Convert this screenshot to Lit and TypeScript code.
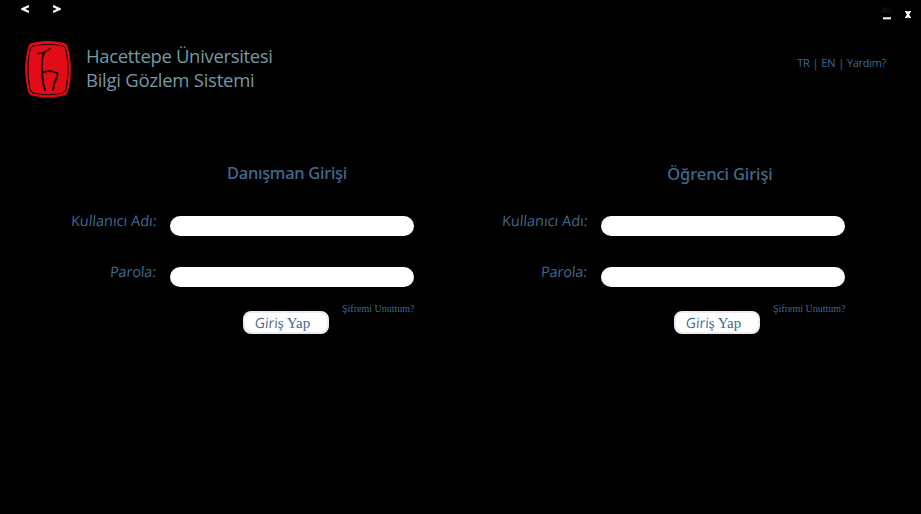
import { LitElement, html, css, svg } from "lit";
import { customElement, property } from "lit/decorators.js";

@customElement("login-panel")
class LoginPanel extends LitElement {
  @property() heading = "";

  static styles = css`
    :host { display: block; width: 345px; color: #41698f; font-family: "Open Sans", sans-serif; }
    h2 { margin: 0 0 0 87px; width: 262px; text-align: center; height: 24px;
      font: 500 16.5px/24px "Noto Sans", sans-serif; letter-spacing: -0.3px; white-space: nowrap; }
    :host(.student) h2 { padding-top: 1px; height: 23px; margin-left: 89px; letter-spacing: -0.1px; }
    .row { display: flex; height: 20px; margin-bottom: 31px; }
    .first { margin-top: 31px; }
    .row:nth-of-type(2) { margin-bottom: 0; }
    label { width: 88px; margin-right: 13px; text-align: right; white-space: nowrap;
      font-size: 14.5px; line-height: 20px; height: 20px; margin-top: -5px; }
    .slant { display: inline-block; transform: skewX(-4deg); }
    .pass { padding-right: 1px; letter-spacing: -0.15px; }
    input { box-sizing: border-box; width: 244px; height: 20px; border: 0; border-radius: 10px;
      padding: 0 10px; background: #fff; outline: none; }
    .actions { display: flex; justify-content: flex-end; align-items: flex-start; gap: 13px; padding-top: 16px; }
    button { box-sizing: border-box; width: 86px; height: 23px; margin: 8px 0 0; padding: 0 7px 0 0;
      border: 2px solid #eeebee; border-radius: 8px; background: #fff; color: #41698f;
      font: 15px/19px "Liberation Serif", serif; white-space: nowrap; }
    .lead { font-family: "Open Sans", sans-serif; font-size: 14px; }
    a { width: 72px; font: 10px/12px "Liberation Serif", serif; white-space: nowrap; text-align: right; }
  `;

  render() {
    return html`
      <h2>${this.heading}</h2>
      <div class="row first"><label><span class="slant">Kullanıcı Adı:</span></label><input type="text" /></div>
      <div class="row"><label><span class="slant pass">Parola:</span></label><input type="password" /></div>
      <div class="actions">
        <button><span class="slant lead">Giri</span>ş Yap</button>
        <a>Şifremi Unuttum?</a>
      </div>`;
  }
}

@customElement("app-root")
class AppRoot extends LitElement {
  static styles = css`
    :host { display: block; width: 921px; height: 514px; background: #000; overflow: hidden;
      font-family: "Open Sans", sans-serif; }
    .bar { display: flex; justify-content: space-between; height: 41px; }
    .nav { display: flex; gap: 24px; padding: 5px 0 0 21px; }
    .win { display: flex; gap: 9px; padding: 7px 9px 0 0; }
    svg { display: block; }
    header { display: flex; height: 57px; padding: 0 35px 0 24px; }
    h1 { flex: 1; margin: 3px 0 0 14px; font: 400 18.5px/24px "Open Sans", sans-serif; letter-spacing: -0.33px;
      color: #7599a5; white-space: nowrap; }
    h1 span { display: block; }
    h1 span + span { letter-spacing: -0.25px; }
    .links { display: flex; gap: 3px; height: 14px; margin-top: 15px; font-size: 11px; letter-spacing: -0.3px;
      line-height: 14px; color: #3d688f; }
    main { display: flex; gap: 86px; padding: 63px 0 0 69px; }
  `;

  render() {
    return html`
      <div class="bar">
        <div class="nav">
          ${["M8 1 L1.5 4 L8 7", "M0 1 L6.5 4 L0 7"].map(
            (d) => html`<svg width="8" height="8" viewBox="0 0 8 8" fill="none" stroke="#fff" stroke-width="2.2">${svg`<path d=${d} />`}</svg>`
          )}
        </div>
        <div class="win">
          <svg width="15" height="14" viewBox="0 0 15 14">
            <path d="M0 6 Q1 0 6 0 T13 6Z" fill="#0b0b0b" /><path d="M3 11.3h8" stroke="#fff" stroke-width="2" />
          </svg>
          <svg width="8" height="14" viewBox="0 0 8 14" fill="none" stroke="#fff">
            <path d="M2.300 4.500L5.700 10.500M5.700 4.500L2.300 10.500" stroke-width="2" />
            <path d="M1 4.500h2.500M4.800 4.500H7M1 10.500h2.500M4.800 10.500H7" />
          </svg>
        </div>
      </div>
      <header>
        <svg width="48" height="57" viewBox="0 0 48 57">
          <path d="M8 2Q24-2 40 2Q43.500 3 44.300 8Q49.500 28 44.300 49Q43.500 53.500 40 54.500Q24 58.500 8 54.500Q4.500 53.500 3.700 49Q-1.500 28 3.700 8Q4.500 3 8 2Z" fill="#e30b17" />
          <path d="M9 5Q24 1.500 39 5Q41.300 5.800 42 9Q46.300 28 42 48Q41.300 51.200 39 52Q24 55.500 9 52Q6.700 51.200 6 48Q1.700 28 6 9Q6.700 5.800 9 5Z" fill="none" stroke="#180305" stroke-width="1.200" />
          <g fill="none" stroke="#0c0203" stroke-linecap="round" stroke-linejoin="round">
            <path d="M14 12.500Q17 12.500 20 11.500Q23 10 26 7.500" stroke-width="1.500" />
            <path d="M20 12Q17 18 18 31Q18.500 42 21 49" stroke-width="1.800" />
            <path d="M18.500 31.500Q26 28.800 32.500 31.700Q34.500 33 32.500 37Q29.500 43 29 49" stroke-width="1.800" />
          </g>
        </svg>
        <h1><span>Hacettepe Üniversitesi</span><span>Bilgi Gözlem Sistemi</span></h1>
        <nav class="links"><a>TR</a><span>|</span><a>EN</a><span>|</span><a>Yardım?</a></nav>
      </header>
      <main>
        <login-panel heading="Danışman Girişi"></login-panel>
        <login-panel class="student" heading="Öğrenci Girişi"></login-panel>
      </main>`;
  }
}
